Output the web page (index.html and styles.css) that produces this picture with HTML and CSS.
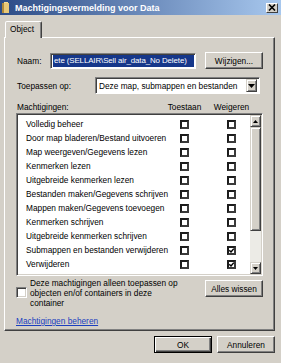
FILE: index.html
```html
<!DOCTYPE html>
<html>
<head>
<meta charset="utf-8">
<link rel="stylesheet" href="styles.css">
</head>
<body>
<div class="window">
  <div class="titlebar">
    <svg class="ticon" width="7" height="11" viewBox="0 0 7 11"><rect x="0" y="1" width="7" height="10" fill="#e8c878"/><rect x="0" y="1" width="2" height="10" fill="#b08a3a"/><rect x="2" y="0" width="4" height="1" fill="#f4dc98"/></svg>
    <span class="title">Machtigingsvermelding voor Data</span>
    <span class="close"><svg width="8" height="7" viewBox="0 0 8 7"><path d="M1 0.5 L7 6.5 M7 0.5 L1 6.5" stroke="#000" stroke-width="1.6"/></svg></span>
  </div>
  <div class="tabs"><div class="tab">Object</div></div>
  <div class="panel">
    <div class="row naam">
      <span class="lbl naamlbl">Naam:</span>
      <div class="input"><span class="sel">ete (SELLAIR\Sell air_data_No Delete)</span></div>
      <span class="btn wijz">Wijzigen...</span>
    </div>
    <div class="row toep">
      <span class="lbl toeplbl">Toepassen op:</span>
      <div class="select"><span class="seltext">Deze map, submappen en bestanden</span><span class="ddbtn"><svg width="7" height="4" viewBox="0 0 7 4"><path d="M0 0 H7 L3.5 4 Z" fill="#000"/></svg></span></div>
    </div>
    <div class="permhead">
      <span class="lbl">Machtigingen:</span>
      <span class="colhead">Toestaan</span>
      <span></span>
      <span class="colhead">Weigeren</span>
    </div>
    <div class="listbox">
      <div class="items">
        <div class="item"><span>Volledig beheer</span><span class="cb"></span><span></span><span class="cb"></span></div>
        <div class="item"><span>Door map bladeren/Bestand uitvoeren</span><span class="cb"></span><span></span><span class="cb"></span></div>
        <div class="item"><span>Map weergeven/Gegevens lezen</span><span class="cb"></span><span></span><span class="cb"></span></div>
        <div class="item"><span>Kenmerken lezen</span><span class="cb"></span><span></span><span class="cb"></span></div>
        <div class="item"><span>Uitgebreide kenmerken lezen</span><span class="cb"></span><span></span><span class="cb"></span></div>
        <div class="item"><span>Bestanden maken/Gegevens schrijven</span><span class="cb"></span><span></span><span class="cb"></span></div>
        <div class="item"><span>Mappen maken/Gegevens toevoegen</span><span class="cb"></span><span></span><span class="cb"></span></div>
        <div class="item"><span>Kenmerken schrijven</span><span class="cb"></span><span></span><span class="cb"></span></div>
        <div class="item"><span>Uitgebreide kenmerken schrijven</span><span class="cb"></span><span></span><span class="cb"></span></div>
        <div class="item"><span>Submappen en bestanden verwijderen</span><span class="cb"></span><span></span><span class="cb"><svg width="5" height="5" viewBox="0 0 5 5"><path d="M0.3 2.3 L2 4 L4.8 0.6" fill="none" stroke="#000" stroke-width="1.4"/></svg></span></div>
        <div class="item"><span>Verwijderen</span><span class="cb"></span><span></span><span class="cb"><svg width="5" height="5" viewBox="0 0 5 5"><path d="M0.3 2.3 L2 4 L4.8 0.6" fill="none" stroke="#000" stroke-width="1.4"/></svg></span></div>
        <div class="item"><span></span><span class="cb"></span><span></span><span class="cb"></span></div>
      </div>
      <div class="scrollbar">
        <span class="sbtn"><svg width="5" height="3" viewBox="0 0 5 3"><path d="M2.5 0 L5 3 H0 Z" fill="#000"/></svg></span>
        <span class="thumb"></span>
        <span class="track"></span>
        <span class="sbtn"><svg width="5" height="3" viewBox="0 0 5 3"><path d="M0 0 H5 L2.5 3 Z" fill="#000"/></svg></span>
      </div>
    </div>
    <div class="applyrow">
      <span class="cb2"></span>
      <span class="applytext">Deze machtigingen alleen toepassen op<br>objecten en/of containers in deze<br>container</span>
      <span class="btn alles">Alles wissen</span>
    </div>
    <div class="linkrow"><a class="link">Machtigingen beheren</a></div>
  </div>
  <div class="footer">
    <span class="btn ok">OK</span>
    <span class="btn">Annuleren</span>
  </div>
</div>
</body>
</html>
```
FILE: styles.css
```css
* { box-sizing: border-box; }
html, body { margin: 0; padding: 0; }
body {
  background: #d4d0c8;
  font-family: "Liberation Sans", Arial, sans-serif;
  font-size: 8.3px;
  color: #000;
}
.window {
  width: 281px;
  height: 363px;
  background: #d4d0c8;
  display: flex;
  flex-direction: column;
  overflow: hidden;
}
.titlebar {
  height: 15px;
  flex: none;
  background: linear-gradient(to right, #2c4b86, #a8c8ee);
  display: flex;
  align-items: center;
  padding-left: 2px;
}
.ticon { display: block; margin-right: 6px; }
.title {
  color: #fff;
  font-weight: bold;
  font-size: 9px;
  flex: 1;
}
.close {
  width: 12px;
  height: 10px;
  margin-right: 3px;
  background: #d4d0c8;
  border: 1px solid;
  border-color: #fff #404040 #404040 #fff;
  display: flex;
  align-items: center;
  justify-content: center;
}
.close svg { display: block; }
.tabs {
  margin-top: 6px;
  padding-left: 5px;
  height: 16px;
  flex: none;
  display: flex;
}
.tab {
  position: relative;
  z-index: 1;
  width: 37px;
  height: 17px;
  border: 1px solid;
  border-bottom: none;
  border-color: #fff #404040 transparent #fff;
  border-radius: 2px 2px 0 0;
  box-shadow: inset -1px 0 #808080;
  background: #d4d0c8;
  padding-left: 4px;
  line-height: 15px;
}
.panel {
  margin-left: 4px;
  width: 271px;
  height: 294px;
  flex: none;
  border: 1px solid;
  border-color: #fff #404040 #404040 #fff;
  box-shadow: inset -1px -1px #808080;
  padding: 0 11px;
  display: flex;
  flex-direction: column;
}
.row {
  display: flex;
  align-items: center;
  height: 17px;
  flex: none;
}
.lbl { padding-left: 1px; white-space: nowrap; }
.naam { margin-top: 14px; }
.naamlbl { width: 34px; }
.input {
  width: 146px;
  height: 16px;
  border: 1px solid;
  border-color: #808080 #fff #fff #808080;
  box-shadow: inset 1px 1px #404040;
  background: #fff;
  padding: 1px 1px 1px 2px;
  overflow: hidden;
  white-space: nowrap;
}
.sel {
  display: block;
  height: 12px;
  line-height: 12px;
  background: #16378a;
  color: #fff;
  padding-left: 1px;
  font-size: 7.9px;
  letter-spacing: -0.1px;
}
.btn {
  display: flex;
  align-items: center;
  justify-content: center;
  width: 58px;
  height: 17px;
  background: #d4d0c8;
  border: 1px solid;
  border-color: #fff #404040 #404040 #fff;
  box-shadow: inset -1px -1px #808080;
  white-space: nowrap;
}
.wijz { margin-left: 9px; }
.toep { margin-top: 8px; }
.toeplbl { width: 79px; }
.select {
  width: 165px;
  height: 17px;
  border: 1px solid;
  border-color: #808080 #fff #fff #808080;
  box-shadow: inset 1px 1px #404040;
  background: #fff;
  display: flex;
  align-items: center;
  padding: 2px 2px 2px 3px;
}
.seltext { flex: 1; white-space: nowrap; }
.ddbtn {
  width: 11px;
  height: 13px;
  background: #d4d0c8;
  border: 1px solid;
  border-color: #d4d0c8 #404040 #404040 #d4d0c8;
  box-shadow: inset 1px 1px #fff, inset -1px -1px #808080;
  display: flex;
  align-items: center;
  justify-content: center;
}
.ddbtn svg, .sbtn svg { display: block; }
.permhead {
  margin-top: 7px;
  height: 12px;
  flex: none;
  display: grid;
  grid-template-columns: 164px 9px 38px 9px;
  align-items: center;
}
.colhead {
  display: flex;
  justify-content: center;
  white-space: nowrap;
}
.listbox {
  width: 247px;
  height: 163px;
  flex: none;
  border: 1px solid;
  border-color: #808080 #fff #fff #808080;
  box-shadow: inset 1px 1px #404040, inset -1px -1px #d4d0c8;
  background: #fff;
  padding: 1px;
  display: flex;
}
.items {
  flex: 1;
  overflow: hidden;
  padding: 2px 0 0 8px;
}
.item {
  height: 14px;
  display: grid;
  grid-template-columns: 154px 9px 38px 9px;
  align-items: center;
  white-space: nowrap;
}
.cb {
  width: 9px;
  height: 9px;
  border: 2px solid #1c1c1c;
  border-right-color: #3a3a3a;
  border-bottom-color: #3a3a3a;
  background: #fff;
  display: flex;
  align-items: center;
  justify-content: center;
}
.cb svg { display: block; }
.scrollbar {
  width: 11px;
  display: flex;
  flex-direction: column;
}
.sbtn, .thumb {
  background: #d4d0c8;
  border: 1px solid;
  border-color: #d4d0c8 #404040 #404040 #d4d0c8;
  box-shadow: inset 1px 1px #fff, inset -1px -1px #808080;
}
.sbtn {
  height: 12px;
  flex: none;
  display: flex;
  align-items: center;
  justify-content: center;
}
.thumb { height: 104px; flex: none; }
.track { flex: 1; background: #ecebe6; }
.applyrow {
  margin-top: 2px;
  display: flex;
  align-items: flex-start;
  flex: none;
}
.cb2 {
  width: 11px;
  height: 11px;
  margin-top: 9px;
  flex: none;
  background: #fff;
  border: 1px solid;
  border-color: #808080 #fff #fff #808080;
  box-shadow: inset 1px 1px #404040, inset -1px -1px #d4d0c8;
}
.applytext {
  margin-left: 3px;
  line-height: 10px;
  white-space: nowrap;
}
.alles { margin-left: auto; margin-top: 2px; }
.linkrow { margin-top: 8px; line-height: 10px; flex: none; }
.link {
  color: #1a3fbf;
  text-decoration: underline;
}
.footer {
  margin-top: 5px;
  display: flex;
  justify-content: flex-end;
  gap: 5px;
  padding-right: 6px;
}
.ok {
  border-color: #000;
  box-shadow: inset 1px 1px #fff, inset -1px -1px #404040, inset -2px -2px #808080;
}
```
